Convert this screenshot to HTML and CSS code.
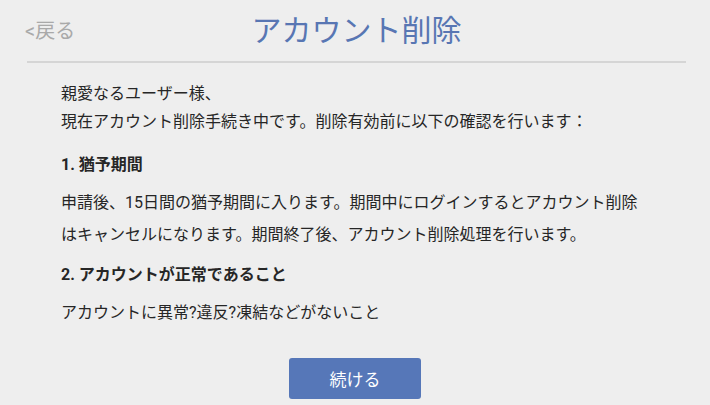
FILE: index.html
```html
<!DOCTYPE html>
<html lang="ja">
<head>
<meta charset="utf-8">
<title>アカウント削除</title>
<link rel="stylesheet" href="styles.css">
</head>
<body>
<header class="header">
  <a class="back">&lt;戻る</a>
  <h1 class="title">アカウント削除</h1>
  <span></span>
</header>
<main class="content">
  <p class="greeting">親愛なるユーザー様、<br>現在アカウント削除手続き中です。削除有効前に以下の確認を行います：</p>
  <h2 class="heading">1. 猶予期間</h2>
  <p class="para">申請後、15日間の猶予期間に入ります。期間中にログインするとアカウント削除<br>はキャンセルになります。期間終了後、アカウント削除処理を行います。</p>
  <h2 class="heading heading-2">2. アカウントが正常であること</h2>
  <p class="para">アカウントに異常?違反?凍結などがないこと</p>
  <div class="actions"><button class="btn">続ける</button></div>
</main>
</body>
</html>
```
FILE: styles.css
```css
html, body {
  margin: 0;
  padding: 0;
  background: #eeeeee;
}
body {
  font-family: Roboto, "Noto Sans CJK JP", sans-serif;
  color: #262626;
}
.header {
  display: grid;
  grid-template-columns: 1fr auto 1fr;
  align-items: center;
  height: 61px;
  margin: 0 24px 0 27px;
  border-bottom: 2px solid #d5d5d5;
}
.back {
  font-size: 20px;
  color: #a9a9a9;
  justify-self: start;
  margin-left: -2px;
  margin-top: -2px;
}
.title {
  margin: 0;
  font-size: 30px;
  font-weight: 400;
  color: #5876b3;
  margin-top: -5px;
}
.content {
  padding: 17px 0 0 61px;
  font-size: 16px;
}
.greeting {
  margin: 0;
  line-height: 28px;
}
.heading {
  margin: 17px 0 0;
  font-size: 16px;
  font-weight: 700;
  line-height: 24px;
}
.heading-2 {
  margin-top: 12px;
}
.para {
  margin: 10px 0 0;
  line-height: 32px;
}
.actions {
  display: flex;
  justify-content: center;
  margin-top: 29px;
  padding-right: 61px;
}
.btn {
  width: 132px;
  height: 41px;
  border: none;
  border-radius: 3px;
  background: #5677b8;
  color: #ffffff;
  font-family: Roboto, "Noto Sans CJK JP", sans-serif;
  font-size: 17px;
}
```
